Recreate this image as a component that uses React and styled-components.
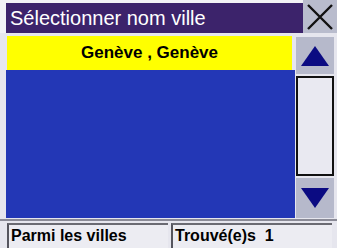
import React from "react";
import styled, { createGlobalStyle } from "styled-components";

const Global = createGlobalStyle`
  html, body { margin: 0; padding: 0; background: #e9e9f0; }
  body { font-family: "Liberation Sans", Arial, sans-serif; }
`;

const Screen = styled.div`
  width: 337px;
  height: 248px;
  background: #e6e6ee;
  display: flex;
  flex-direction: column;
  overflow: hidden;
`;

const Header = styled.div`
  display: flex;
  height: 33px;
  background: #f2f2f6;
`;

const TitleBar = styled.div`
  flex: 1;
  margin: 3px 0 0 6px;
  background: #3c236b;
  color: #ffffff;
  font-size: 20px;
  display: flex;
  align-items: center;
  padding-left: 4px;
  padding-top: 1px;
`;

const CloseBox = styled.div`
  width: 34px;
  background: #b9bccd;
  display: flex;
  align-items: center;
  justify-content: center;
`;

const Main = styled.div`
  display: flex;
  margin-top: 3px;
  height: 182px;
  padding-left: 6px;
  gap: 1px;
`;

const ListCol = styled.div`
  width: 289px;
  display: flex;
  flex-direction: column;
`;

const SelectedRow = styled.div`
  height: 34px;
  margin-left: 1px;
  margin-right: 3px;
  background: #ffff00;
  display: flex;
  align-items: center;
  justify-content: center;
  font-weight: bold;
  font-size: 17px;
  color: #000;
`;

const ListArea = styled.div`
  flex: 1;
  background: #2337b6;
`;

const ScrollCol = styled.div`
  width: 38px;
  display: flex;
  flex-direction: column;
  gap: 2px;
  padding-top: 1px;
`;

const ArrowButton = styled.div`
  height: ${(p) => p.$h}px;
  background: #b6b9cb;
  display: flex;
  align-items: center;
  justify-content: center;
`;

const Track = styled.div`
  flex: 1;
  background: #e9e9f1;
  border: 2px solid #111;
`;

const Footer = styled.div`
  flex: 1;
  margin-top: 1px;
  border-top: 2px solid #8a8a96;
  display: flex;
  gap: 3px;
  padding: 2px 0 0 7px;
`;

const Field = styled.div`
  width: ${(p) => p.$w}px;
  background: #ececf2;
  border-top: 2px solid #6a6a72;
  border-left: 2px solid #55555e;
  font-weight: bold;
  font-size: 16px;
  color: #000;
  display: flex;
  align-items: center;
  padding-left: 2px;
  padding-bottom: 2px;
  box-sizing: border-box;
`;

const Tri = ({ down }) => (
  <svg width="28" height="20" viewBox="0 0 28 20">
    <polygon
      points={down ? "0,0 28,0 14,20" : "14,0 28,20 0,20"}
      fill="#0b0b82"
    />
  </svg>
);

export default function App() {
  return (
    <Screen>
      <Global />
      <Header>
        <TitleBar>Sélectionner nom ville</TitleBar>
        <CloseBox>
          <svg width="26" height="26" viewBox="0 0 26 26">
            <path d="M1 1 L25 25 M25 1 L1 25" stroke="#111" strokeWidth="2.4" fill="none" />
          </svg>
        </CloseBox>
      </Header>
      <Main>
        <ListCol>
          <SelectedRow>Genève , Genève</SelectedRow>
          <ListArea />
        </ListCol>
        <ScrollCol>
          <ArrowButton $h={37}>
            <Tri />
          </ArrowButton>
          <Track />
          <ArrowButton $h={40}>
            <Tri down />
          </ArrowButton>
        </ScrollCol>
      </Main>
      <Footer>
        <Field $w={161}>Parmi les villes</Field>
        <Field $w={161}>Trouvé(e)s&nbsp;&nbsp;1</Field>
      </Footer>
    </Screen>
  );
}
